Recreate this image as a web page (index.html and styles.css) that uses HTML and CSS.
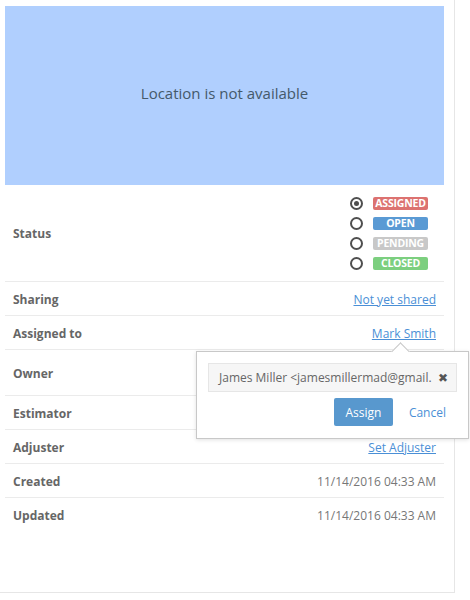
FILE: index.html
```html
<!DOCTYPE html>
<html>
<head>
<meta charset="utf-8">
<link rel="stylesheet" href="styles.css">
</head>
<body>
<div class="panel">
  <div class="map">Location is not available</div>
  <div class="row status-row">
    <div class="label">Status</div>
    <div class="statuses">
      <div class="status"><span class="radio checked"></span><span class="badge red">ASSIGNED</span></div>
      <div class="status"><span class="radio"></span><span class="badge blue">OPEN</span></div>
      <div class="status"><span class="radio"></span><span class="badge grey">PENDING</span></div>
      <div class="status"><span class="radio"></span><span class="badge green">CLOSED</span></div>
    </div>
  </div>
  <div class="row"><div class="label">Sharing</div><a class="link" href="#">Not yet shared</a></div>
  <div class="row assigned">
    <div class="label">Assigned to</div><a class="link" href="#">Mark Smith</a>
    <div class="popover">
      <div class="arrow"></div>
      <div class="input"><span class="input-text">James Miller &lt;jamesmillermad@gmail.</span><span class="clear">&#10006;</span></div>
      <div class="actions"><button class="btn">Assign</button><a class="cancel" href="#">Cancel</a></div>
    </div>
  </div>
  <div class="row owner"><div class="label">Owner</div></div>
  <div class="row"><div class="label">Estimator</div></div>
  <div class="row"><div class="label">Adjuster</div><a class="link" href="#">Set Adjuster</a></div>
  <div class="row"><div class="label">Created</div><span class="value">11/14/2016 04:33 AM</span></div>
  <div class="row"><div class="label">Updated</div><span class="value">11/14/2016 04:33 AM</span></div>
</div>
</body>
</html>
```
FILE: styles.css
```css
html, body { margin: 0; padding: 0; background: #fff; }
body { font-family: "Open Sans", "DejaVu Sans", sans-serif; font-size: 12px; color: #666; }
.panel {
  width: 439px;
  height: 586px;
  padding: 6px 10px 0 5px;
  border-right: 1px solid #e6e6e6;
  border-bottom: 1px solid #e6e6e6;
}
.map {
  height: 179px;
  background: #b0cffe;
  display: flex;
  align-items: center;
  justify-content: center;
  font-size: 15px;
  color: #44596a;
  padding-bottom: 6px;
  box-sizing: border-box;
}
.row {
  display: flex;
  align-items: center;
  justify-content: space-between;
  height: 34px;
  padding: 1px 8px 0 8px;
  border-bottom: 1px solid #ebebeb;
  box-sizing: border-box;
}
.row:last-child { border-bottom: none; }
.label { font-weight: bold; color: #666; font-size: 12px; }
.link { color: #4a8fd6; text-decoration: underline; font-size: 12px; }
.value { color: #777; font-size: 12px; }
.status-row { height: 97px; padding-top: 1px; }
.statuses { display: flex; flex-direction: column; margin-right: 8px; }
.status { display: flex; align-items: center; height: 20px; }
.radio {
  width: 13px; height: 13px; box-sizing: border-box;
  border: 2px solid #4f4f4f; border-radius: 50%;
  margin-right: 10px;
  display: flex; align-items: center; justify-content: center;
}
.radio.checked::after {
  content: ""; width: 5px; height: 5px; border-radius: 50%; background: #4f4f4f;
}
.badge {
  width: 55px; height: 13px; border-radius: 2px;
  color: #fff; font-weight: bold; font-size: 10.5px;
  display: flex; align-items: center; justify-content: center;
  line-height: 13px; letter-spacing: -0.2px;
}
.red { background: #dc7270; }
.blue { background: #5a9ad4; }
.grey { background: #c8c8c8; }
.green { background: #7ccf7f; }
.assigned { position: relative; }
.owner { height: 46px; }
.popover {
  position: absolute;
  left: 191px; top: 35px;
  width: 273px; height: 88px;
  box-sizing: border-box;
  background: #fff;
  border: 1px solid #c8c8c8;
  box-shadow: 0 1px 4px rgba(0,0,0,0.12);
  padding: 11px 11px 0 11px;
  z-index: 2;
}
.arrow {
  position: absolute;
  left: 197px; top: -7px;
  width: 12px; height: 12px;
  background: #fff;
  border-left: 1px solid #c8c8c8;
  border-top: 1px solid #c8c8c8;
  transform: rotate(45deg);
}
.input {
  height: 29px; box-sizing: border-box;
  background: #f6f6f6; border: 1px solid #e6e6e6;
  display: flex; align-items: center; justify-content: space-between;
  padding: 0 8px 0 10px;
  color: #666; font-size: 12px;
}
.clear { font-size: 12px; color: #555; }
.actions { display: flex; justify-content: flex-end; align-items: center; margin-top: 6px; }
.btn {
  width: 59px; height: 28px;
  background: #5898ce; color: #fff; border: none; border-radius: 2px;
  font-family: "Open Sans", sans-serif; font-size: 12px;
}
.cancel { color: #4a8fd6; text-decoration: none; font-size: 12px; margin-left: 16px; margin-right: 11px; }
```
